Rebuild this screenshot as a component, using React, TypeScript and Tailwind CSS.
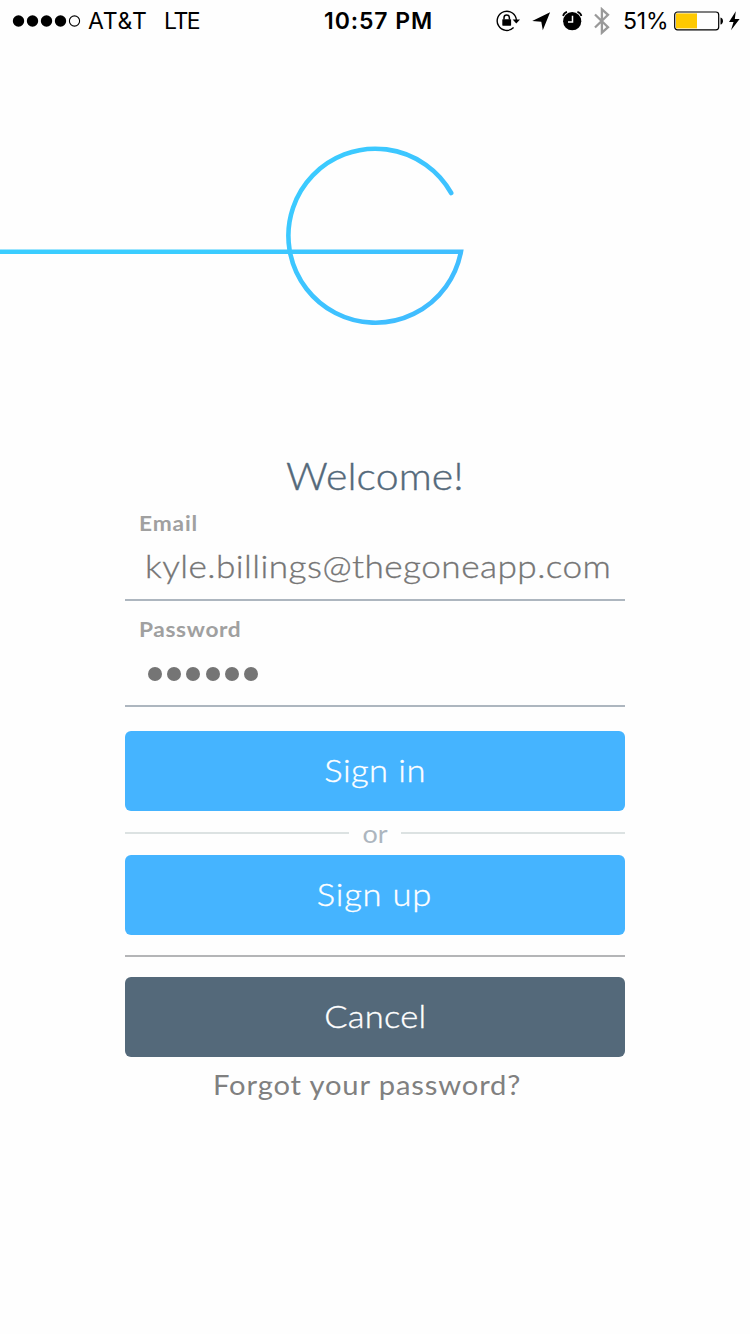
import type { ReactNode } from "react";

const PASSWORD_LENGTH = 6;

function StatusBar() {
  return (
    <header className="grid h-[41px] grid-cols-[313px_131px_1fr] items-center font-['Inter',sans-serif] text-[23px] leading-[39px] text-black">
      <div className="flex h-[41px] items-center">
        <svg className="ml-3 h-[14px] w-[70px]" viewBox="0 0 70 14">
          <circle cx="6.5" cy="7" r="5.7" />
          <circle cx="20.5" cy="7" r="5.7" />
          <circle cx="34.5" cy="7" r="5.7" />
          <circle cx="48.5" cy="7" r="5.7" />
          <circle cx="62.5" cy="7" r="5.1" fill="none" stroke="black" strokeWidth="1.1" />
        </svg>
        <span className="ml-[6px] w-[76px] pt-[2px] tracking-[0.8px]">AT&amp;T</span>
        <span className="pt-[2px] tracking-[-1.4px]">LTE</span>
      </div>
      <span className="pt-[2px] text-center font-semibold tracking-[0.9px]">10:57 PM</span>
      <div className="flex h-[41px] items-center">
        <svg className="ml-[50px] h-[26px] w-[27px]" viewBox="0 0 27 26">
          <path d="M22.4 12.5A9.6 9.6 0 1 0 19.6 19.6" fill="none" stroke="black" strokeWidth="1.4" />
          <path d="M18.6 11.6h7.4l-3.7 4z" />
          <rect x="8.3" y="11.2" width="8.8" height="6.5" rx=".6" />
          <path d="M10 11.5V9.7a2.7 2.7 0 0 1 5.4 0v1.8" fill="none" stroke="black" strokeWidth="1.5" />
        </svg>
        <svg className="ml-[10px] h-[20px] w-[20px]" viewBox="0 0 20 20">
          <path d="M19.1 1.3 1.2 10l9.1.8 1.5 8.4z" />
        </svg>
        <svg className="ml-[10px] h-[22px] w-[22px]" viewBox="0 0 22 22">
          <circle cx="11.2" cy="11.2" r="9.1" />
          <path d="M2.1 6A5.5 5.5 0 0 1 6 1.9M20.4 6A5.5 5.5 0 0 0 16.4 1.9" fill="none" stroke="black" strokeWidth="1.7" />
          <path d="M11.5 5.8v6.1H7" fill="none" stroke="white" strokeWidth="1.5" />
        </svg>
        <svg className="ml-[10px] h-[28px] w-[18px]" viewBox="0 0 18 28">
          <path d="m2 7.5 13 12.7-6.1 5.5V2.3L15 7.8 2 20.5" fill="none" stroke="#999" strokeWidth="2.3" />
        </svg>
        <span className="ml-[12px] w-[51px] pt-[2px] tracking-[-0.2px]">51%</span>
        <svg className="h-[22px] w-[67px]" viewBox="0 0 67 22">
          <rect x=".7" y="2" width="44" height="17.8" rx="2.8" fill="white" stroke="black" strokeWidth="1.2" />
          <path fill="#ffc900" d="M2 3.4h21v15H2z" />
          <path d="M46.5 7.4c3.3.5 3.3 6.6 0 7.1z" />
          <path d="M61.8 1.2 55 12h4.5l-2.5 8.3 8.6-11.3h-4.8z" />
        </svg>
      </div>
    </header>
  );
}

function Logo() {
  return (
    <svg className="mt-[89px] h-[210px] w-full" viewBox="0 130 750 210" fill="none">
      <defs>
        <linearGradient id="sky" gradientUnits="userSpaceOnUse" x1="290" y1="150" x2="460" y2="320">
          <stop stopColor="#3acdff" />
          <stop offset="1" stopColor="#41baff" />
        </linearGradient>
      </defs>
      <path
        d="M-5 251.8H460.9A87 87 0 1 1 451.2 193"
        stroke="url(#sky)"
        strokeWidth="4.6"
        strokeLinecap="round"
      />
    </svg>
  );
}

function Button({ tone, children }: { tone: string; children: ReactNode }) {
  return (
    <button className={`block h-20 w-full rounded-md pb-[3px] text-center text-[32px] leading-[77px] font-light text-white ${tone}`}>
      <span className="inline-block scale-x-108 [-webkit-text-stroke:0.35px_white]">{children}</span>
    </button>
  );
}

export default function App() {
  return (
    <div className="h-[1334px] w-[750px] overflow-hidden bg-[#fefefe] font-['Lato',sans-serif]">
      <StatusBar />
      <Logo />
      <main className="mx-auto w-[500px]">
        <h1 className="mt-[110px] h-[50px] scale-x-108 text-center text-[38px] leading-[51px] font-light tracking-[0.1px] text-[#54697a] [-webkit-text-stroke:0.4px_#54697a]">
          Welcome!
        </h1>
        <section className="h-[101px] border-b-2 border-[#adb6bf]">
          <div className="ml-[14px] origin-left scale-x-108 pt-[8px] text-[21px] leading-[30px] font-bold tracking-[0.8px] text-[#a0a0a0]">Email</div>
          <div className="mt-[6px] ml-[20px] origin-left scale-x-110 text-[32px] leading-[43px] font-light tracking-[0.4px] whitespace-nowrap text-[#757575] [-webkit-text-stroke:0.35px_#757575]">
            kyle.billings@thegoneapp.com
          </div>
        </section>
        <section className="h-[106px] border-b-2 border-[#adb6bf]">
          <div className="ml-[14px] origin-left scale-x-108 pt-[13px] text-[21px] leading-[30px] font-bold tracking-[0.6px] text-[#a0a0a0]">Password</div>
          <div className="mt-[23px] ml-[22.5px] flex gap-[5.35px]">
            {Array.from({ length: PASSWORD_LENGTH }, (_, i) => (
              <span key={i} className="size-[14px] rounded-full bg-[#757575]" />
            ))}
          </div>
        </section>
        <div className="mt-6">
          <Button tone="bg-[#45b4ff] tracking-[0.4px]">Sign in</Button>
        </div>
        <div className="flex h-[44px] items-center gap-3">
          <span className="h-[2px] w-[224px] bg-[#dce2e2]" />
          <span className="flex-1 scale-x-108 text-center text-[25px] leading-[44px] text-[#adb6bf]">or</span>
          <span className="h-[2px] w-[224px] bg-[#dce2e2]" />
        </div>
        <Button tone="bg-[#45b4ff] pr-[2px] tracking-[0.7px]">Sign up</Button>
        <hr className="my-5 border-0 border-t-2 border-[#b4b5b7]" />
        <Button tone="bg-[#54697a] tracking-[0.2px]">Cancel</Button>
        <a className="mt-[8px] ml-[88px] block origin-left scale-x-108 text-[27px] leading-[40px] tracking-[0.8px] whitespace-nowrap text-[#808080]">
          Forgot your password?
        </a>
      </main>
    </div>
  );
}
